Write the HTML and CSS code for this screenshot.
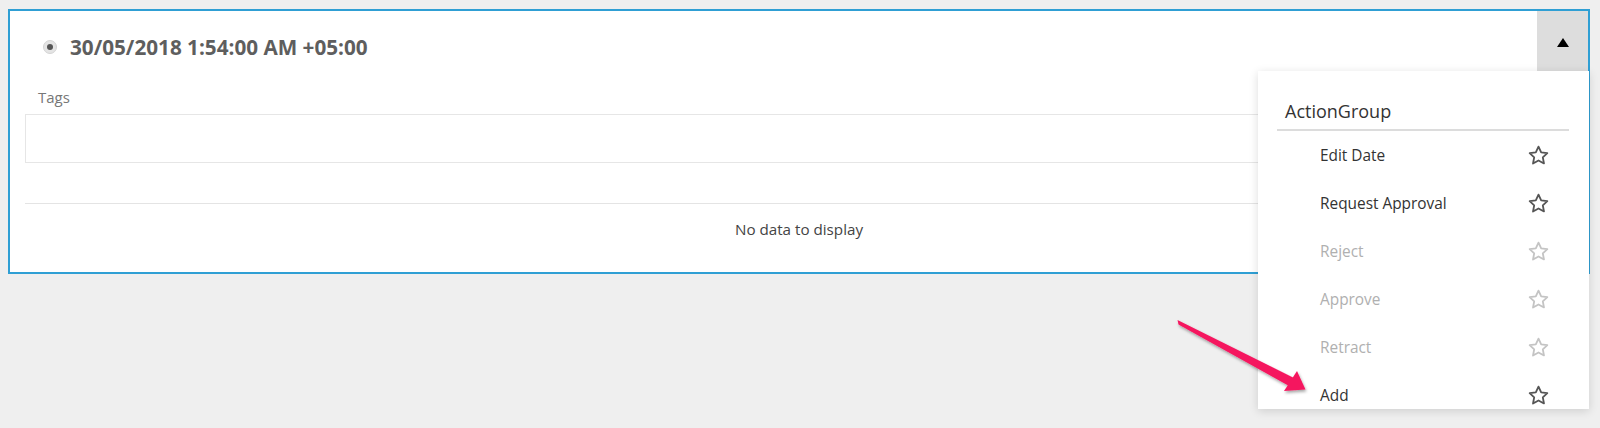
FILE: index.html
```html
<!DOCTYPE html>
<html lang="en">
<head>
  <meta charset="UTF-8" />
  <title>Action group</title>
  <link rel="stylesheet" href="styles.css">
</head>
<body>

<div class="panel">
  <div class="panel-header">
    <span class="radio"><span class="radio-dot"></span></span>
    <span class="panel-title">30/05/2018 1:54:00 AM +05:00</span>
    <button class="toggle"><span class="caret"></span></button>
  </div>

  <div class="panel-body">
    <div class="field-label">Tags</div>
    <div class="tag-box"></div>
    <div class="grid">
      <div class="grid-empty">No data to display</div>
    </div>
  </div>
</div>

<div class="dropdown">
  <div class="dropdown-title">ActionGroup</div>
  <ul class="menu">
    <li class="menu-item">Edit Date <svg class="star" viewBox="0 0 24 24"><path d="M12 2.8l2.8 5.9 6.4.8-4.7 4.4 1.2 6.4L12 17.2l-5.7 3.1 1.2-6.4L2.8 9.5l6.4-.8z"/></svg></li>
    <li class="menu-item">Request Approval <svg class="star" viewBox="0 0 24 24"><path d="M12 2.8l2.8 5.9 6.4.8-4.7 4.4 1.2 6.4L12 17.2l-5.7 3.1 1.2-6.4L2.8 9.5l6.4-.8z"/></svg></li>
    <li class="menu-item disabled">Reject <svg class="star" viewBox="0 0 24 24"><path d="M12 2.8l2.8 5.9 6.4.8-4.7 4.4 1.2 6.4L12 17.2l-5.7 3.1 1.2-6.4L2.8 9.5l6.4-.8z"/></svg></li>
    <li class="menu-item disabled">Approve <svg class="star" viewBox="0 0 24 24"><path d="M12 2.8l2.8 5.9 6.4.8-4.7 4.4 1.2 6.4L12 17.2l-5.7 3.1 1.2-6.4L2.8 9.5l6.4-.8z"/></svg></li>
    <li class="menu-item disabled">Retract <svg class="star" viewBox="0 0 24 24"><path d="M12 2.8l2.8 5.9 6.4.8-4.7 4.4 1.2 6.4L12 17.2l-5.7 3.1 1.2-6.4L2.8 9.5l6.4-.8z"/></svg></li>
    <li class="menu-item">Add <svg class="star" viewBox="0 0 24 24"><path d="M12 2.8l2.8 5.9 6.4.8-4.7 4.4 1.2 6.4L12 17.2l-5.7 3.1 1.2-6.4L2.8 9.5l6.4-.8z"/></svg></li>
  </ul>
</div>

<!-- annotation arrow -->
<div class="arrow">
  <svg width="140" height="80" viewBox="1172 316 140 80">
    <defs>
      <filter id="shadow" x="-20%" y="-20%" width="140%" height="160%">
        <feDropShadow dx="1" dy="2" stdDeviation="1.5" flood-color="#000" flood-opacity="0.35"/>
      </filter>
    </defs>
    <g filter="url(#shadow)" fill="#f5175f">
      <polygon points="1177.5,320 1178.5,324.5 1290,386.5 1294,378"/>
      <polygon points="1305.5,389.5 1284,391 1297,371"/>
    </g>
  </svg>
</div>

</body>
</html>
```

FILE: styles.css
```css
body {
  font-family: "Open Sans", Arial, sans-serif;
  background: #efefef;
  margin: 0;
  padding: 9px 10px 8px 8px;
}

.panel {
  background: white;
  border: 2px solid #2f9fd4;
}

.panel-header {
  display: flex;
  align-items: center;
  height: 60px;
}

.radio {
  width: 12px;
  height: 12px;
  margin: 12px 0 0 33px;
  border-radius: 50%;
  background: #e4e4e4;
  border: 1px solid #d4d4d4;
  display: flex;
  align-items: center;
  justify-content: center;
}

.radio-dot {
  width: 6px;
  height: 6px;
  border-radius: 50%;
  background: #555;
}

.panel-title {
  margin: 12px 0 0 13px;
  font-size: 20.7px;
  font-weight: bold;
  color: #5e5e5e;
  line-height: 26px;
  flex: 1;
}

.toggle {
  align-self: stretch;
  width: 51px;
  border: none;
  background: #dddddd;
  padding: 0;
  display: flex;
  align-items: center;
  justify-content: center;
}

.caret {
  width: 0;
  height: 0;
  border-left: 6px solid transparent;
  border-right: 6px solid transparent;
  border-bottom: 9px solid black;
  margin-top: 2px;
}

.panel-body {
  padding: 16px 15px 17px 15px;
}

.field-label {
  padding-left: 13px;
  font-size: 15px;
  line-height: 20px;
  color: #777;
  margin-bottom: 7px;
}

.tag-box {
  height: 47px;
  border: 1px solid #e6e6e6;
}

.grid {
  margin-top: 40px;
  border-top: 1px solid #e4e4e4;
}

.grid-empty {
  text-align: center;
  font-size: 15.2px;
  line-height: 20px;
  color: #444;
  padding: 15px 0 16px;
}

.dropdown {
  position: absolute;
  top: 71px;
  left: 1258px;
  width: 331px;
  height: 338px;
  overflow: hidden;
  background: white;
  box-shadow: 0 2px 9px rgba(0, 0, 0, 0.14);
  z-index: 5;
}

.dropdown-title {
  margin: 0 20px 0 19px;
  padding: 28px 0 6px 8px;
  font-size: 18px;
  line-height: 24px;
  color: #333;
  border-bottom: 2px solid #dcdcdc;
}

.menu {
  list-style: none;
  margin: 0;
  padding: 0;
}

.menu-item {
  display: flex;
  align-items: center;
  justify-content: space-between;
  height: 48px;
  padding: 0 39px 0 62px;
  font-size: 15.4px;
  color: #333;
}

.menu-item.disabled {
  color: #b0b0b0;
}

.star {
  width: 23px;
  height: 23px;
  fill: none;
  stroke: #555;
  stroke-width: 1.9;
  stroke-linejoin: round;
}

.menu-item.disabled .star {
  stroke: #c4c4c4;
}

.arrow {
  position: absolute;
  left: 1172px;
  top: 316px;
  z-index: 6;
  line-height: 0;
}
```
